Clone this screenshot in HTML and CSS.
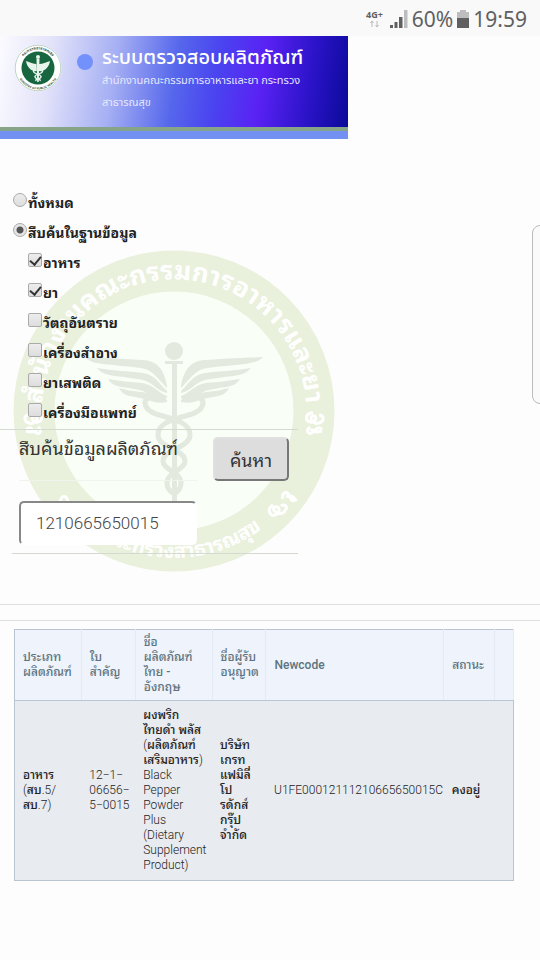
FILE: index.html
```
<!DOCTYPE html>
<html lang="th">
<head>
<meta charset="utf-8">
<meta name="viewport" content="width=device-width, initial-scale=1">
<title>ระบบตรวจสอบผลิตภัณฑ์</title>
<link rel="stylesheet" href="styles.css">
</head>
<body>
<div class="status">
  <svg class="network" viewBox="0 0 20 20" aria-hidden="true">
    <text x="0" y="9">4G+</text>
    <path d="M6 12v6M4.500 14l1.500-2 1.500 2M11 12v6M9.500 16l1.500 2 1.500-2"/>
  </svg>
  <svg class="signal" viewBox="0 0 18 18" aria-hidden="true">
    <path class="on" d="M0 15h3v3H0zM4.500 12h3v6h-3zM9 7h3.500v11H9z"/>
    <path class="off" d="M14 0h3.500v18H14z"/>
  </svg>
  <span>60%</span>
  <svg class="battery" viewBox="0 0 12 18" aria-hidden="true">
    <path class="off" d="M3 0h6v2h3v6H0V2h3z"/>
    <path class="on" d="M0 8h12v10H0z"/>
  </svg>
  <span>19:59</span>
</div>

<header class="banner">
  <svg class="logo" viewBox="0 0 48 48" aria-hidden="true">
    <defs><path id="seal" d="M8 33.200a18.500 18.500 0 1 1 32 0"/>
    <path id="sealLow" d="M2.500 24a21.500 21.500 0 0 0 43 0"/></defs>
    <circle cx="24" cy="24" r="23.500" fill="#fff"/>
    <circle cx="24" cy="24" r="22.800" fill="none" stroke="#7da68c" stroke-width=".5"/>
    <circle cx="24" cy="24" r="16.500" fill="#17663f"/>
    <text class="seal-text" text-anchor="middle"><textPath href="#seal" startOffset="50%">กระทรวงสาธารณสุข</textPath></text>
    <text class="seal-text" text-anchor="middle"><textPath href="#sealLow" startOffset="50%">MINISTRY OF PUBLIC HEALTH</textPath></text>
    <circle cx="24" cy="13" r="2" fill="#e9f4ec"/>
    <path d="M22.500 15h3l-.7 23h-1.600zM23 20C19 20 16 18 12 17c1 6 5 11 11 10zM25 20c4 0 7-2 11-3-1 6-5 11-11 10z" fill="#e9f4ec"/>
    <path d="M20 26c-3 4 8 4 7 7s-6 1-5 4M28 26c3 4-8 4-7 7s6 1 5 4" fill="none" stroke="#e9f4ec" stroke-width="1.500"/>
  </svg>
  <span class="dot"></span>
  <div class="titles">
    <h1>ระบบตรวจสอบผลิตภัณฑ์</h1>
    <p>สำนักงานคณะกรรมการอาหารและยา กระทรวง<br>สาธารณสุข</p>
  </div>
</header>

<main>
  <svg class="watermark" viewBox="0 0 320 324" aria-hidden="true">
    <defs>
      <path id="arcTop" d="M57 245a132 132 0 1 1 206 0"/>
      <path id="arcLow" d="M13 162a147 147 0 0 0 294 0"/>
    </defs>
    <circle cx="160" cy="162" r="140" fill="#f9fef6" stroke="#e9f1dc" stroke-width="41"/>
    <g class="ring-text">
      <text text-anchor="middle"><textPath href="#arcTop" startOffset="50%">สำนักงานคณะกรรมการอาหารและยา</textPath></text>
      <text class="low" text-anchor="middle"><textPath href="#arcLow" startOffset="52%">กระทรวงสาธารณสุข</textPath></text>
    </g>
    <g fill="none" stroke="#fff" stroke-width="3">
      <path d="M299 164c-7-1-9 8-3 9s8-7 3-6 0 9 6 7 5-8 0-8M296 178c-5 4-1 9 3 5s6-6 9-2M297 180c3 5 8 3 11 2"/>
      <path d="M21 164c7-1 9 8 3 9s-8-7-3-6 0 9-6 7-5-8 0-8M24 178c5 4 1 9-3 5s-6-6-9-2M23 180c-3 5-8 3-11 2"/>
      <path d="M259 256c-6 3-4 12 2 10s5-10 0-8 4 10 9 5 1-9-3-6M269 250c-2-6 4-9 6-4s3 8 8 4M272 248c5-3 8 0 10 4"/>
      <path d="M64 259c6 3 4 12-2 10s-5-10 0-8-4 10-9 5-1-9 3-6M53 254c2-6-4-9-6-4s-3 8-8 4"/>
    </g>
    <g class="wings">
      <circle cx="160" cy="102" r="9"/>
      <path d="M151 112h18v3h-6v142h-5V115h-7z"/>
      <g id="wing">
        <path d="M153 137c-3-15-8-25-24-26-18-1-32-2-58-3 5 6 16 7 28 8 18 2 32 2 38 7 6 4 9 9 16 16z"/>
        <path d="M153 142c-8-7-11-16-24-18-16-2-29-2-46-5 5 7 16 8 27 9 12 2 20 2 26 6 6 4 9 8 17 10z"/>
        <path d="M153 147c-10-4-13-11-25-13-12-1-22-2-34-4 4 7 12 8 21 9 10 2 14 2 19 6 6 4 11 4 19 4z"/>
        <path d="M153 151c-12-1-15-7-26-8-9-1-14-2-22-4 3 6 8 8 16 9 8 1 11 3 16 4 5 2 10 2 16 1z"/>
      </g>
      <use href="#wing" transform="matrix(-1 0 0 1 320 0)"/>
    </g>
    <g class="snakes">
      <path d="M152 150c-9 3-8-5-16-2-9 4-5 13 6 17 17 5 34 8 34 21 0 13-27 14-27 26 0 9 18 11 18 22 0 5-3 9-8 11"/>
      <path d="M168 150c9 3 8-5 16-2 9 4 5 13-6 17-17 5-34 8-34 21 0 13 27 14 27 26 0 9-18 11-18 22 0 5 3 9 8 11"/>
    </g>
  </svg>

  <form class="search">
    <fieldset class="options">
      <label><input type="radio" name="scope">ทั้งหมด</label>
      <label><input type="radio" name="scope" checked>สืบค้นในฐานข้อมูล</label>
      <label class="sub"><input type="checkbox" checked>อาหาร</label>
      <label class="sub"><input type="checkbox" checked>ยา</label>
      <label class="sub"><input type="checkbox">วัตถุอันตราย</label>
      <label class="sub"><input type="checkbox">เครื่องสำอาง</label>
      <label class="sub"><input type="checkbox">ยาเสพติด</label>
      <label class="sub"><input type="checkbox">เครื่องมือแพทย์</label>
    </fieldset>
    <div class="query">
      <label for="q">สืบค้นข้อมูลผลิตภัณฑ์</label>
      <button type="button">ค้นหา</button>
      <input id="q" type="text" value="1210665650015">
    </div>
  </form>
</main>

<section class="results">
  <table>
    <colgroup><col class="c-type"><col class="c-lic"><col class="c-name"><col class="c-owner"><col class="c-code"><col class="c-state"><col></colgroup>
    <thead>
      <tr>
        <th>ประเภท<br>ผลิตภัณฑ์</th>
        <th>ใบ<br>สำคัญ</th>
        <th>ชื่อ<br>ผลิตภัณฑ์<br>ไทย -<br>อังกฤษ</th>
        <th>ชื่อผู้รับ<br>อนุญาต</th>
        <th>Newcode</th>
        <th>สถานะ</th>
        <th></th>
      </tr>
    </thead>
    <tbody>
      <tr>
        <td><b>อาหาร</b><br>(<b>สบ</b>.5/<br><b>สบ</b>.7)</td>
        <td>12−1−<br>06656−<br>5−0015</td>
        <td><b>ผงพริก<br>ไทยดำ พลัส</b><br>(<b>ผลิตภัณฑ์<br>เสริมอาหาร</b>)<br>Black<br>Pepper<br>Powder<br>Plus<br>(Dietary<br>Supplement<br>Product)</td>
        <td><b>บริษัท<br>เกรท<br>แฟมิลี่<br>โป<br>รดักส์<br>กรุ๊ป<br>จำกัด</b></td>
        <td>U1FE00012111210665650015C</td>
        <td><b>คงอยู่</b></td>
        <td></td>
      </tr>
    </tbody>
  </table>
</section>
<div class="edge-panel"></div>
</body>
</html>
```
FILE: styles.css
```
:root {
  --looped: "Noto Sans Thai Looped", "Noto Looped Thai", Loma, Garuda, Waree, "Droid Sans Thai", "Noto Sans Thai";
}
* { box-sizing: border-box; }
body {
  margin: 0;
  min-height: 100vh;
  position: relative;
  overflow-x: hidden;
  background: #fdfdfd;
  color: #333;
  font-family: Roboto, var(--looped), sans-serif;
}
.status {
  display: flex;
  justify-content: flex-end;
  align-items: center;
  gap: 4px;
  height: 36px;
  padding: 2px 13px 0 0;
  background: #f9f9f9;
  color: #606060;
  font: 21px "Noto Sans", sans-serif;
}
.network { width: 20px; height: 20px; overflow: visible; }
.network text { font: bold 9px "Noto Sans", sans-serif; fill: #606060; }
.network path { fill: none; stroke: #bbb; stroke-width: 1; }
.signal { width: 18px; height: 18px; }
.battery { width: 12px; height: 18px; }
.on { fill: #606060; }
.off { fill: #bdbdbd; }

.banner {
  display: flex;
  align-items: flex-start;
  width: 64.5%;
  padding: 8px 0 17px 14px;
  border-bottom: 8px solid #7391f3;
  background:
    linear-gradient(#86a487, #86a487) bottom / 100% 4px no-repeat,
    linear-gradient(98deg, #fbfbff 0%, #e2e2fa 15%, #a5aff3 33%, #5667ec 50%, #4a43f0 62%, #5a22f4 74%, #2b13c8 88%, #0a0a98 100%);
}
.logo { width: 48px; height: 48px; flex: none; }
.seal-text { font: bold 3px "Noto Sans", "Noto Sans Thai", sans-serif; fill: #31533f; }
.seal-text:first-of-type { font-size: 4px; }
.dot { width: 16px; height: 16px; margin: 10px 9px 0 15px; flex: none; border-radius: 50%; background: #7391fb; }
.titles { color: #fff; white-space: nowrap; font-family: Roboto, "Noto Sans Thai", sans-serif; }
h1 { margin: 0; font-size: 20px; line-height: 26px; font-weight: 500; }
p { margin: 0; font-size: 11px; line-height: 22px; color: #e6e8ff; }

main { position: relative; padding-top: 47px; }
.watermark { position: absolute; z-index: -1; left: 14px; top: 110px; width: 320px; height: 324px; overflow: visible; }
.ring-text { fill: #fff; font: bold 26px var(--looped), sans-serif; }
.ring-text .low { font-size: 20px; }
.wings { fill: #e3e9df; }
.snakes { fill: none; stroke: #e3e9df; stroke-width: 5; }

.search { width: 298px; max-width: 100%; padding-bottom: 50px; }
.options {
  display: flex;
  flex-direction: column;
  margin: 0;
  padding: 0 0 3px 13px;
  border: 0;
  border-bottom: 1px solid #d5dad0;
}
.options label {
  display: flex;
  align-items: center;
  height: 30px;
  gap: 1px;
  font-size: 14px;
  font-weight: bold;
  color: #222;
}
.options .sub { padding-left: 15px; }
.options input {
  appearance: none;
  width: 14px;
  height: 14px;
  margin: 0 0 2px;
  flex: none;
  border: 1px solid #aaa;
  border-radius: 2px;
  background: linear-gradient(#ededed, #ddd);
}
.options input[type="radio"] { border-radius: 50%; }
.options input[type="radio"]:checked { background: radial-gradient(circle, #555 0 3px, #e6e6e6 4px); }
.options input[type="checkbox"]:checked::after {
  content: "";
  display: block;
  width: 5px;
  height: 9px;
  margin-left: 3px;
  border: solid #333;
  border-width: 0 2px 2px 0;
  transform: rotate(40deg);
}
.query {
  display: grid;
  grid-template-columns: 178px 76px;
  grid-template-rows: 44px 44px;
  column-gap: 16px;
  row-gap: 20px;
  margin-left: 12px;
  padding: 7px 0 8px 7px;
  border-bottom: 1px solid #d5dad0;
}
.query label { font-size: 18px; line-height: 24px; border-bottom: 1px solid #f1f4ec; color: #333; white-space: nowrap; }
button {
  border: 2px solid;
  border-color: #e0e0e0 #777 #777 #e0e0e0;
  border-radius: 5px;
  background: #ddd;
  color: #333;
  font: 18px Roboto, var(--looped), sans-serif;
}
.query input {
  width: 100%;
  min-width: 0;
  padding: 0 15px;
  border: 2px solid;
  border-color: #888 #fff #fff #888;
  border-radius: 5px;
  background: #fff;
  color: #444;
  font: 300 17px Roboto, sans-serif;
}
.results {
  padding: 24px 26px 0 14px;
  border-top: 1px solid #ddd;
  background: linear-gradient(#ddd, #ddd) 0 15px / 100% 1px no-repeat;
}
table {
  width: 100%;
  table-layout: fixed;
  border-collapse: collapse;
  border: 1px solid #b9c4d0;
  font-size: 12px;
  line-height: 15px;
}
.c-type { width: 13.4%; }
.c-lic { width: 10.8%; }
.c-name { width: 15.4%; }
.c-owner { width: 10.8%; }
.c-code { width: 35.6%; }
.c-state { width: 10.2%; }
th, td { padding: 7px 0 7px 8px; text-align: left; white-space: nowrap; vertical-align: middle; }
th { padding: 5px 0 5px 8px; background: #eff3fb; color: #5c7480; font-weight: 500; border-right: 1px solid #e3eaf3; border-bottom: 1px solid #b9c6d6; }
td { background: #e8ebef; color: #222; font-weight: 300; }
td b { font-weight: 500; }
.edge-panel {
  position: absolute;
  right: -8px;
  top: 225px;
  width: 16px;
  height: 179px;
  border: 1px solid #bbb;
  border-radius: 8px;
  background: #fafafa;
}
```
